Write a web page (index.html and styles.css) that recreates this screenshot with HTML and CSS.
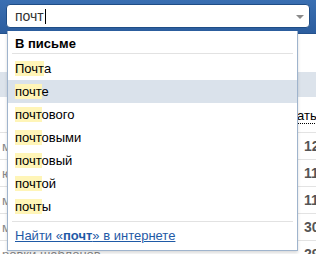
FILE: index.html
```html
<!DOCTYPE html>
<html lang="ru">
<head>
<meta charset="UTF-8">
<title>Поиск по письмам</title>
<link rel="stylesheet" href="styles.css">
</head>
<body>
<div class="topbar">
  <div class="search">
    <span class="query">почт</span><span class="caret"></span>
    <span class="arrow"></span>
  </div>
</div>

<table class="mails">
  <tr class="head"><td class="subj"></td><td class="num"></td></tr>
  <tr class="sort"><td class="subj"></td><td class="num"><span class="dotted">ать</span></td></tr>
  <tr><td class="subj">м</td><td class="num">12</td></tr>
  <tr><td class="subj">ю</td><td class="num">11</td></tr>
  <tr><td class="subj">м</td><td class="num">11</td></tr>
  <tr><td class="subj">мі</td><td class="num">30</td></tr>
  <tr><td class="subj">ровки шаблонов</td><td class="num">29</td></tr>
</table>

<div class="suggest">
  <div class="group">В письме</div>
  <ul class="items">
    <li><mark>Почт</mark>а</li>
    <li class="active"><mark>почт</mark>е</li>
    <li><mark>почт</mark>ового</li>
    <li><mark>почт</mark>овыми</li>
    <li><mark>почт</mark>овый</li>
    <li><mark>почт</mark>ой</li>
    <li><mark>почт</mark>ы</li>
  </ul>
  <div class="web"><a href="#">Найти «<b>почт</b>» в интернете</a></div>
</div>
</body>
</html>
```

FILE: styles.css
```css
body {
  margin: 0;
  font-family: "Liberation Sans", Arial, sans-serif;
  font-size: 13px;
  background: #fff;
  position: relative;
  overflow: hidden;
}
.topbar {
  height: 34px;
  padding: 4px 6px 0;
  box-sizing: border-box;
  background: linear-gradient(#3a6fb2, #2c5d9e);
  border-bottom: 1px solid #24528d;
}
.search {
  height: 24px;
  background: #fff;
  border: 1px solid #1f4d86;
  border-radius: 4px;
  box-sizing: border-box;
  display: flex;
  align-items: center;
  padding-left: 8px;
  position: relative;
}
.query {
  color: #333;
  font-size: 14px;
}
.caret {
  width: 1px;
  height: 15px;
  background: #000;
  margin-left: 1px;
}
.arrow {
  position: absolute;
  right: 5px;
  top: 10px;
  border-left: 4px solid transparent;
  border-right: 4px solid transparent;
  border-top: 4px solid #8a8a8a;
}
/* table behind the suggest list */
.mails {
  width: 100%;
  border-collapse: collapse;
  margin-top: 38px;
  table-layout: fixed;
}
.mails td {
  border-bottom: 1px solid #e3e3e3;
  height: 26px;
  padding: 0 2px;
  color: #888;
  white-space: nowrap;
  overflow: visible;
}
.mails .head td {
  background: #dce3eb;
  height: 25px;
  border-bottom: none;
}
.mails .sort td {
  height: 35px;
}
.mails .num {
  width: 12px;
  padding: 0 0 0 6px;
  color: #555;
  font-weight: bold;
  font-size: 14px;
}
.dotted {
  margin-left: -7px;
  color: #000;
  font-weight: normal;
  font-size: 13px;
  border-bottom: 1px dotted #000;
}
/* suggest dropdown */
.suggest {
  position: absolute;
  top: 31px;
  left: 7px;
  width: 291px;
  height: 220px;
  box-sizing: border-box;
  background: #fff;
  border: 1px solid #9fb4cd;
  border-top: none;
  box-shadow: 0 2px 3px rgba(0, 0, 0, 0.15);
}
.group {
  margin: 0 4px;
  padding: 3px 3px 0;
  height: 19px;
  line-height: 20px;
  font-weight: bold;
  color: #000;
  border-bottom: 1px solid #e2e2e2;
}
.items {
  list-style: none;
  margin: 3px 0 0;
  padding: 0;
}
.items li {
  height: 23px;
  line-height: 23px;
  padding-left: 7px;
  color: #000;
}
.items li.active {
  background: #dae2eb;
}
mark {
  background: #fff5b8;
  color: inherit;
}
.web {
  margin: 3px 4px 0;
  padding: 6px 3px 0;
  border-top: 1px solid #e2e2e2;
}
.web a {
  color: #1f5aa6;
}
```
